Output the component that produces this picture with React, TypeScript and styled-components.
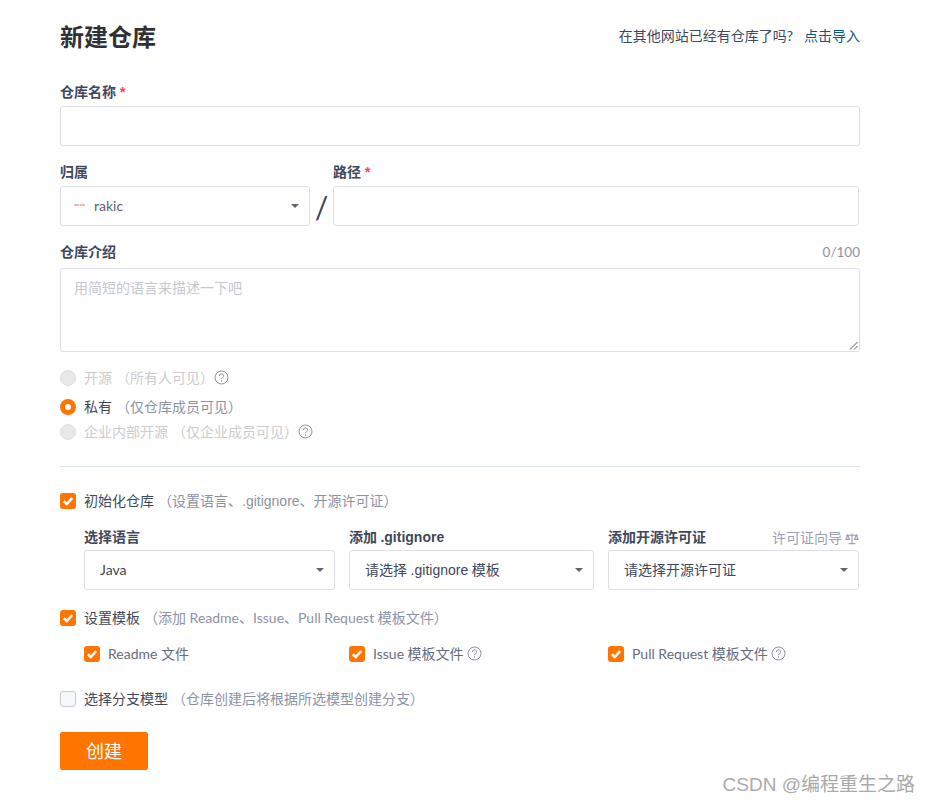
import styled, { createGlobalStyle } from "styled-components";

const FONT = `Lato, "Noto Sans CJK SC", sans-serif`;
const ARIAL = `"Liberation Sans", "Noto Sans CJK SC", sans-serif`;

const GlobalStyle = createGlobalStyle`
  html, body {
    margin: 0;
    padding: 0;
    background: #fff;
    font-family: ${FONT};
  }
  * { box-sizing: border-box; }
`;

const Page = styled.div`
  position: relative;
  width: 930px;
  height: 802px;
  overflow: hidden;
  padding: 18px 70px 0 60px;
`;
const Header = styled.div`
  display: flex;
  justify-content: space-between;
  align-items: center;
  height: 34px;
  margin-bottom: 31px;
`;
const Title = styled.h1`
  margin: 0;
  font-size: 24px;
  font-weight: 700;
  color: #2f3135;
`;
const ImportHint = styled.div`
  font-size: 14px;
  color: #40485b;
  a { color: #005980; margin-left: 11px; }
`;
const Label = styled.div<{ $gap?: number }>`
  display: flex;
  justify-content: space-between;
  font-size: 14px;
  font-weight: 700;
  line-height: 18px;
  height: 20px;
  margin-bottom: ${(p) => p.$gap ?? 3}px;
  color: #40485b;
`;
const Req = styled.span`
  font-family: ${ARIAL};
  color: #f5454d;
  margin-left: 4px;
`;
const GitName = styled.span`
  font-family: ${ARIAL};
`;
const Field = styled.div<{ $flex?: string }>`
  flex: ${(p) => p.$flex || "none"};
  min-width: 0;
`;
const Input = styled.div`
  height: 40px;
  border: 1px solid #dcdfe8;
  border-radius: 3px;
  background: #fff;
`;
const Row = styled.div<{ $top?: number; $right?: number }>`
  display: flex;
  align-items: flex-start;
  margin-top: ${(p) => p.$top ?? 17}px;
  margin-right: ${(p) => p.$right ?? 0}px;
`;
const Slash = styled.div`
  width: 23px;
  height: 40px;
  margin-top: 22px;
  text-align: center;
  font-size: 30px;
  font-weight: 400;
  line-height: 44px;
  color: #40485b;
`;
const Select = styled.div`
  display: flex;
  align-items: center;
  justify-content: space-between;
  height: 40px;
  padding: 0 10px 2px 15px;
  border: 1px solid #dcdfe8;
  border-radius: 3px;
  font-size: 14px;
  color: #40485b;
`;
const Owner = styled.span`
  display: flex;
  align-items: center;
  gap: 9px;
  margin-left: -2px;
  color: #5a6275;
`;
const Avatar = styled.i`
  display: block;
  width: 11px;
  height: 2px;
  background: repeating-linear-gradient(90deg, #f5b5b9 0 5px, #fbe3e4 5px 6px);
`;
const Caret = styled.i`
  width: 0;
  height: 0;
  margin-top: 2px;
  border-left: 4px solid transparent;
  border-right: 4px solid transparent;
  border-top: 4px solid #5e6472;
`;
const Counter = styled.span`
  font-size: 13.5px;
  font-weight: 400;
  color: #8c92a4;
`;
const TextArea = styled.div`
  position: relative;
  height: 84px;
  padding: 8px 13px;
  border: 1px solid #dcdfe8;
  border-radius: 3px;
  font-size: 14px;
  color: #c4c7cf;
`;
const ResizeGrip = styled.svg`
  position: absolute;
  right: 1px;
  bottom: 1px;
`;
const OptionRow = styled.div<{ $top: number; $left?: number }>`
  display: flex;
  align-items: center;
  height: 20px;
  margin-top: ${(p) => p.$top}px;
  margin-left: ${(p) => p.$left ?? 0}px;
  font-size: 14px;
  color: #40485b;
`;
const Radio = styled.span<{ $on?: boolean }>`
  flex: none;
  width: 16px;
  height: 16px;
  border-radius: 50%;
  margin-right: 8px;
  background: ${(p) => (p.$on ? "#fff" : "#e8e8e8")};
  border: ${(p) => (p.$on ? "5px solid #ff7500" : "1px solid #dedede")};
`;
const OptionText = styled.span<{ $off?: boolean }>`
  padding-bottom: 2px;
  color: ${(p) => (p.$off ? "#ccc" : "#40485b")};
  white-space: nowrap;
`;
const Note = styled.span<{ $off?: boolean }>`
  margin-left: 4px;
  padding-bottom: 2px;
  color: ${(p) => (p.$off ? "#ccc" : "#8c92a4")};
  white-space: nowrap;
`;
const Divider = styled.div`
  height: 1px;
  margin-top: 24px;
  background: #dce3e9;
`;
const Check = styled.span`
  flex: none;
  display: flex;
  align-items: center;
  justify-content: center;
  width: 16px;
  height: 16px;
  margin-right: 8px;
  border-radius: 3px;
  background: #ff7500;
`;
const EmptyCheck = styled.span`
  flex: none;
  width: 16px;
  height: 16px;
  margin-right: 8px;
  border-radius: 3px;
  background: #f7f8fa;
  border: 1px solid #c8ccd6;
`;
const SubGrid = styled.div`
  display: grid;
  grid-template-columns: 251px 245px 251px;
  gap: 0 14px;
  margin-left: 24px;
`;
const Guide = styled.span`
  display: flex;
  align-items: center;
  gap: 3px;
  font-weight: 400;
  color: #9a9fae;
`;
const CheckCol = styled.div<{ $w: number }>`
  display: flex;
  align-items: center;
  width: ${(p) => p.$w}px;
  color: #666c7d;
  white-space: nowrap;
`;
const CheckLabel = styled.span`
  margin-right: 3px;
  padding-bottom: 2px;
`;
const HelpIcon = styled.svg`
  flex: none;
  margin-top: -1px;
`;
const Button = styled.button`
  display: block;
  width: 88px;
  height: 38px;
  margin-top: 23px;
  padding: 0 0 2px;
  border: none;
  border-radius: 2px;
  background: #ff7500;
  color: #fff;
  font-family: ${FONT};
  font-size: 18px;
`;
const Watermark = styled.div`
  position: absolute;
  right: 15px;
  bottom: 6px;
  font-family: ${ARIAL};
  font-size: 19px;
  color: #aaa;
`;

const Tick = () => (
  <svg width="12" height="12" viewBox="0 0 12 12">
    <path d="M1.8 6.2 L4.8 9 L10.2 3" fill="none" stroke="#fff" strokeWidth="2.6" />
  </svg>
);

const Help = () => (
  <HelpIcon width="15" height="15" viewBox="0 0 15 15">
    <circle cx="7.5" cy="7.5" r="6.5" fill="none" stroke="#8c92a4" />
    <path d="M5.4 6a2.1 2.1 0 1 1 3.2 1.7c-.7.4-1.1.8-1.1 1.6" fill="none" stroke="#8c92a4" />
    <circle cx="7.5" cy="11" r=".7" fill="#8c92a4" />
  </HelpIcon>
);

const Scale = () => (
  <svg width="14" height="13" viewBox="0 0 15 13">
    <path
      d="M7.5 1v10M4 12h7M1 3h13M3 3 1 7.5h4zM12 3l-2 4.5h4z"
      fill="none"
      stroke="#9a9fae"
      strokeWidth="1.2"
    />
  </svg>
);

export default function App() {
  return (
    <Page>
      <GlobalStyle />
      <Header>
        <Title>新建仓库</Title>
        <ImportHint>
          在其他网站已经有仓库了吗?<a>点击导入</a>
        </ImportHint>
      </Header>

      <Label>
        <span>仓库名称<Req>*</Req></span>
      </Label>
      <Input />

      <Row $top={17} $right={1}>
        <Field $flex="0 0 250px">
          <Label>归属</Label>
          <Select>
            <Owner><Avatar />rakic</Owner>
            <Caret />
          </Select>
        </Field>
        <Slash>/</Slash>
        <Field $flex="1">
          <Label><span>路径<Req>*</Req></span></Label>
          <Input />
        </Field>
      </Row>

      <Row>
        <Field $flex="1">
          <Label $gap={5}>
            <span>仓库介绍</span>
            <Counter>0/100</Counter>
          </Label>
          <TextArea>
            用简短的语言来描述一下吧
            <ResizeGrip width="9" height="9" viewBox="0 0 9 9">
              <path d="M8.5 1 1 8.5M8.5 5 5 8.5" stroke="#555" fill="none" />
            </ResizeGrip>
          </TextArea>
        </Field>
      </Row>

      <OptionRow $top={16}>
        <Radio />
        <OptionText $off>开源</OptionText>
        <Note $off>（所有人可见）</Note>
        <Help />
      </OptionRow>
      <OptionRow $top={9}>
        <Radio $on />
        <OptionText>私有</OptionText>
        <Note>（仅仓库成员可见）</Note>
      </OptionRow>
      <OptionRow $top={5}>
        <Radio />
        <OptionText $off>企业内部开源</OptionText>
        <Note $off>（仅企业成员可见）</Note>
        <Help />
      </OptionRow>

      <Divider />

      <OptionRow $top={24}>
        <Check><Tick /></Check>
        <OptionText>初始化仓库</OptionText>
        <Note>（设置语言、<GitName>.gitignore</GitName>、开源许可证）</Note>
      </OptionRow>

      <Row $top={17} $right={1}>
        <SubGrid>
          <Field>
            <Label $gap={2}>选择语言</Label>
            <Select>Java<Caret /></Select>
          </Field>
          <Field>
            <Label $gap={2}><span>添加 <GitName>.gitignore</GitName></span></Label>
            <Select><span>请选择 <GitName>.gitignore</GitName> 模板</span><Caret /></Select>
          </Field>
          <Field>
            <Label $gap={2}>
              <span>添加开源许可证</span>
              <Guide>许可证向导<Scale /></Guide>
            </Label>
            <Select>请选择开源许可证<Caret /></Select>
          </Field>
        </SubGrid>
      </Row>

      <OptionRow $top={18}>
        <Check><Tick /></Check>
        <OptionText>设置模板</OptionText>
        <Note>（添加 Readme、Issue、Pull Request 模板文件）</Note>
      </OptionRow>

      <OptionRow $top={16} $left={24}>
        <CheckCol $w={265}><Check><Tick /></Check><CheckLabel>Readme 文件</CheckLabel></CheckCol>
        <CheckCol $w={259}><Check><Tick /></Check><CheckLabel>Issue 模板文件</CheckLabel><Help /></CheckCol>
        <CheckCol $w={250}><Check><Tick /></Check><CheckLabel>Pull Request 模板文件</CheckLabel><Help /></CheckCol>
      </OptionRow>

      <OptionRow $top={25}>
        <EmptyCheck />
        <OptionText>选择分支模型</OptionText>
        <Note>（仓库创建后将根据所选模型创建分支）</Note>
      </OptionRow>

      <Button>创建</Button>
      <Watermark>CSDN @编程重生之路</Watermark>
    </Page>
  );
}
